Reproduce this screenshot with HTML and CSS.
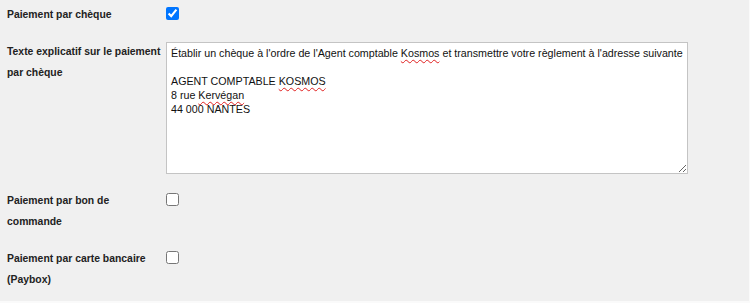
FILE: index.html
```html
<!DOCTYPE html>
<html lang="fr">
<head>
    <meta charset="UTF-8">
    <meta name="viewport" content="width=device-width, initial-scale=1.0">
    <title>Modes de paiement</title>
    <link rel="stylesheet" href="styles.css">
</head>
<body>

<div class="panel">
    <div class="row">
        <label class="row-label" for="payCheque">Paiement par chèque</label>
        <div class="row-field">
            <input type="checkbox" id="payCheque" checked>
        </div>
    </div>

    <div class="row">
        <label class="row-label" for="chequeText">Texte explicatif sur le paiement par chèque</label>
        <div class="row-field">
            <div class="textarea" id="chequeText" contenteditable="true">Établir un chèque à l'ordre de l'Agent comptable <span class="typo">Kosmos</span> et transmettre votre règlement à l'adresse suivante<br><br>AGENT COMPTABLE <span class="typo">KOSMOS</span><br>8 rue <span class="typo">Kervégan</span><br>44 000 NANTES</div>
        </div>
    </div>

    <div class="row">
        <label class="row-label" for="payOrder">Paiement par bon de commande</label>
        <div class="row-field">
            <input type="checkbox" id="payOrder">
        </div>
    </div>

    <div class="row">
        <label class="row-label" for="payCard">Paiement par carte bancaire (Paybox)</label>
        <div class="row-field">
            <input type="checkbox" id="payCard">
        </div>
    </div>
</div>

</body>
</html>
```

FILE: styles.css
```css
body {
    margin: 0;
    padding: 0;
    background-color: #fafafa;
    font-family: Arial, "Liberation Sans", sans-serif;
}

.panel {
    width: 749px;
    height: 301px;
    background-color: #f0f0f0;
    box-sizing: border-box;
    padding: 4px 0 0 7px;
}

.row {
    display: flex;
    margin-bottom: 16px;
}

.row-label {
    width: 154px;
    flex-shrink: 0;
    font-size: 10.4px;
    font-weight: bold;
    line-height: 21px;
    color: #222;
}

.row-field {
    padding-left: 5px;
}

.row-field input[type="checkbox"] {
    margin: 3px 0 0 0;
    width: 13px;
    height: 13px;
}

.textarea {
    width: 512px;
    height: 124px;
    padding: 3px 4px;
    margin-top: 1px;
    border: 1px solid #c4c4c4;
    background: #fff;
    font-size: 10.7px;
    line-height: 14px;
    color: #111;
    white-space: nowrap;
    overflow: hidden;
    resize: both;
    outline: none;
}

.typo {
    text-decoration: underline wavy #e02020;
    text-decoration-thickness: 1px;
    text-underline-offset: 2px;
}
```
